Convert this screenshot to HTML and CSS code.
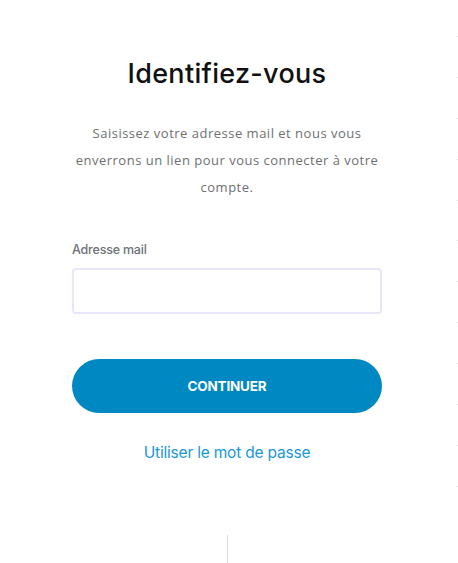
FILE: index.html
```html
<!DOCTYPE html>
<html lang="fr">
<head>
<meta charset="utf-8">
<title>Identifiez-vous</title>
<link rel="stylesheet" href="styles.css">
</head>
<body>
<div class="page">
  <main class="card">
    <h1 class="title">Identifiez-vous</h1>
    <p class="intro">Saisissez votre adresse mail et nous vous enverrons un lien pour vous connecter à votre compte.</p>
    <form class="form">
      <label class="label" for="email">Adresse mail</label>
      <input class="input" id="email" type="email">
      <button class="btn" type="button">CONTINUER</button>
    </form>
    <a class="link" href="#">Utiliser le mot de passe</a>
  </main>
  <div class="divider"></div>
</div>
<div class="edge"></div>
</body>
</html>
```

FILE: styles.css
```css
html, body {
  margin: 0;
  padding: 0;
  background: #ffffff;
}
body {
  font-family: "Lato", "Open Sans", sans-serif;
  height: 563px;
  overflow: hidden;
  position: relative;
}
.page {
  width: 454px;
  display: flex;
  flex-direction: column;
  align-items: center;
}
.card {
  width: 310px;
  padding-top: 54px;
  display: flex;
  flex-direction: column;
  align-items: center;
}
.title {
  margin: 0;
  font-family: "Inter", sans-serif;
  font-weight: 500;
  font-size: 27px;
  line-height: 40px;
  color: #111111;
  letter-spacing: 0.3px;
}
.intro {
  margin: 26px 0 0;
  width: 320px;
  font-family: "Open Sans", sans-serif;
  font-size: 13px;
  line-height: 27px;
  letter-spacing: 0.5px;
  color: #6f6f6f;
  text-align: center;
}
.form {
  width: 310px;
  margin-top: 41px;
  display: flex;
  flex-direction: column;
}
.label {
  font-family: "Inter", sans-serif;
  font-size: 12.5px;
  font-weight: 500;
  color: #6e7276;
  line-height: 16px;
  letter-spacing: -0.2px;
}
.input {
  margin-top: 10px;
  height: 46px;
  box-sizing: border-box;
  border: 2px solid #e8e6fb;
  border-radius: 4px;
  background: #fff;
  padding: 0 12px;
  outline: none;
}
.btn {
  margin-top: 45px;
  height: 54px;
  border: none;
  border-radius: 27px;
  background: #0088c2;
  color: #ffffff;
  font-family: "Inter", sans-serif;
  font-weight: 700;
  font-size: 13.5px;
  letter-spacing: -0.2px;
  cursor: pointer;
}
.link {
  margin-top: 30px;
  font-family: "Inter", sans-serif;
  font-size: 15.5px;
  line-height: 20px;
  color: #1a97d5;
  text-decoration: none;
  letter-spacing: -0.2px;
}
.divider {
  margin-top: 72px;
  width: 1px;
  height: 40px;
  background: #dcdcdc;
}
.edge {
  position: absolute;
  top: 0;
  right: 0;
  width: 1px;
  height: 500px;
  background: repeating-linear-gradient(to bottom, transparent 0, transparent 36px, #e2e2e6 36px, #e2e2e6 37px, transparent 37px, transparent 40.9px);
}
```
